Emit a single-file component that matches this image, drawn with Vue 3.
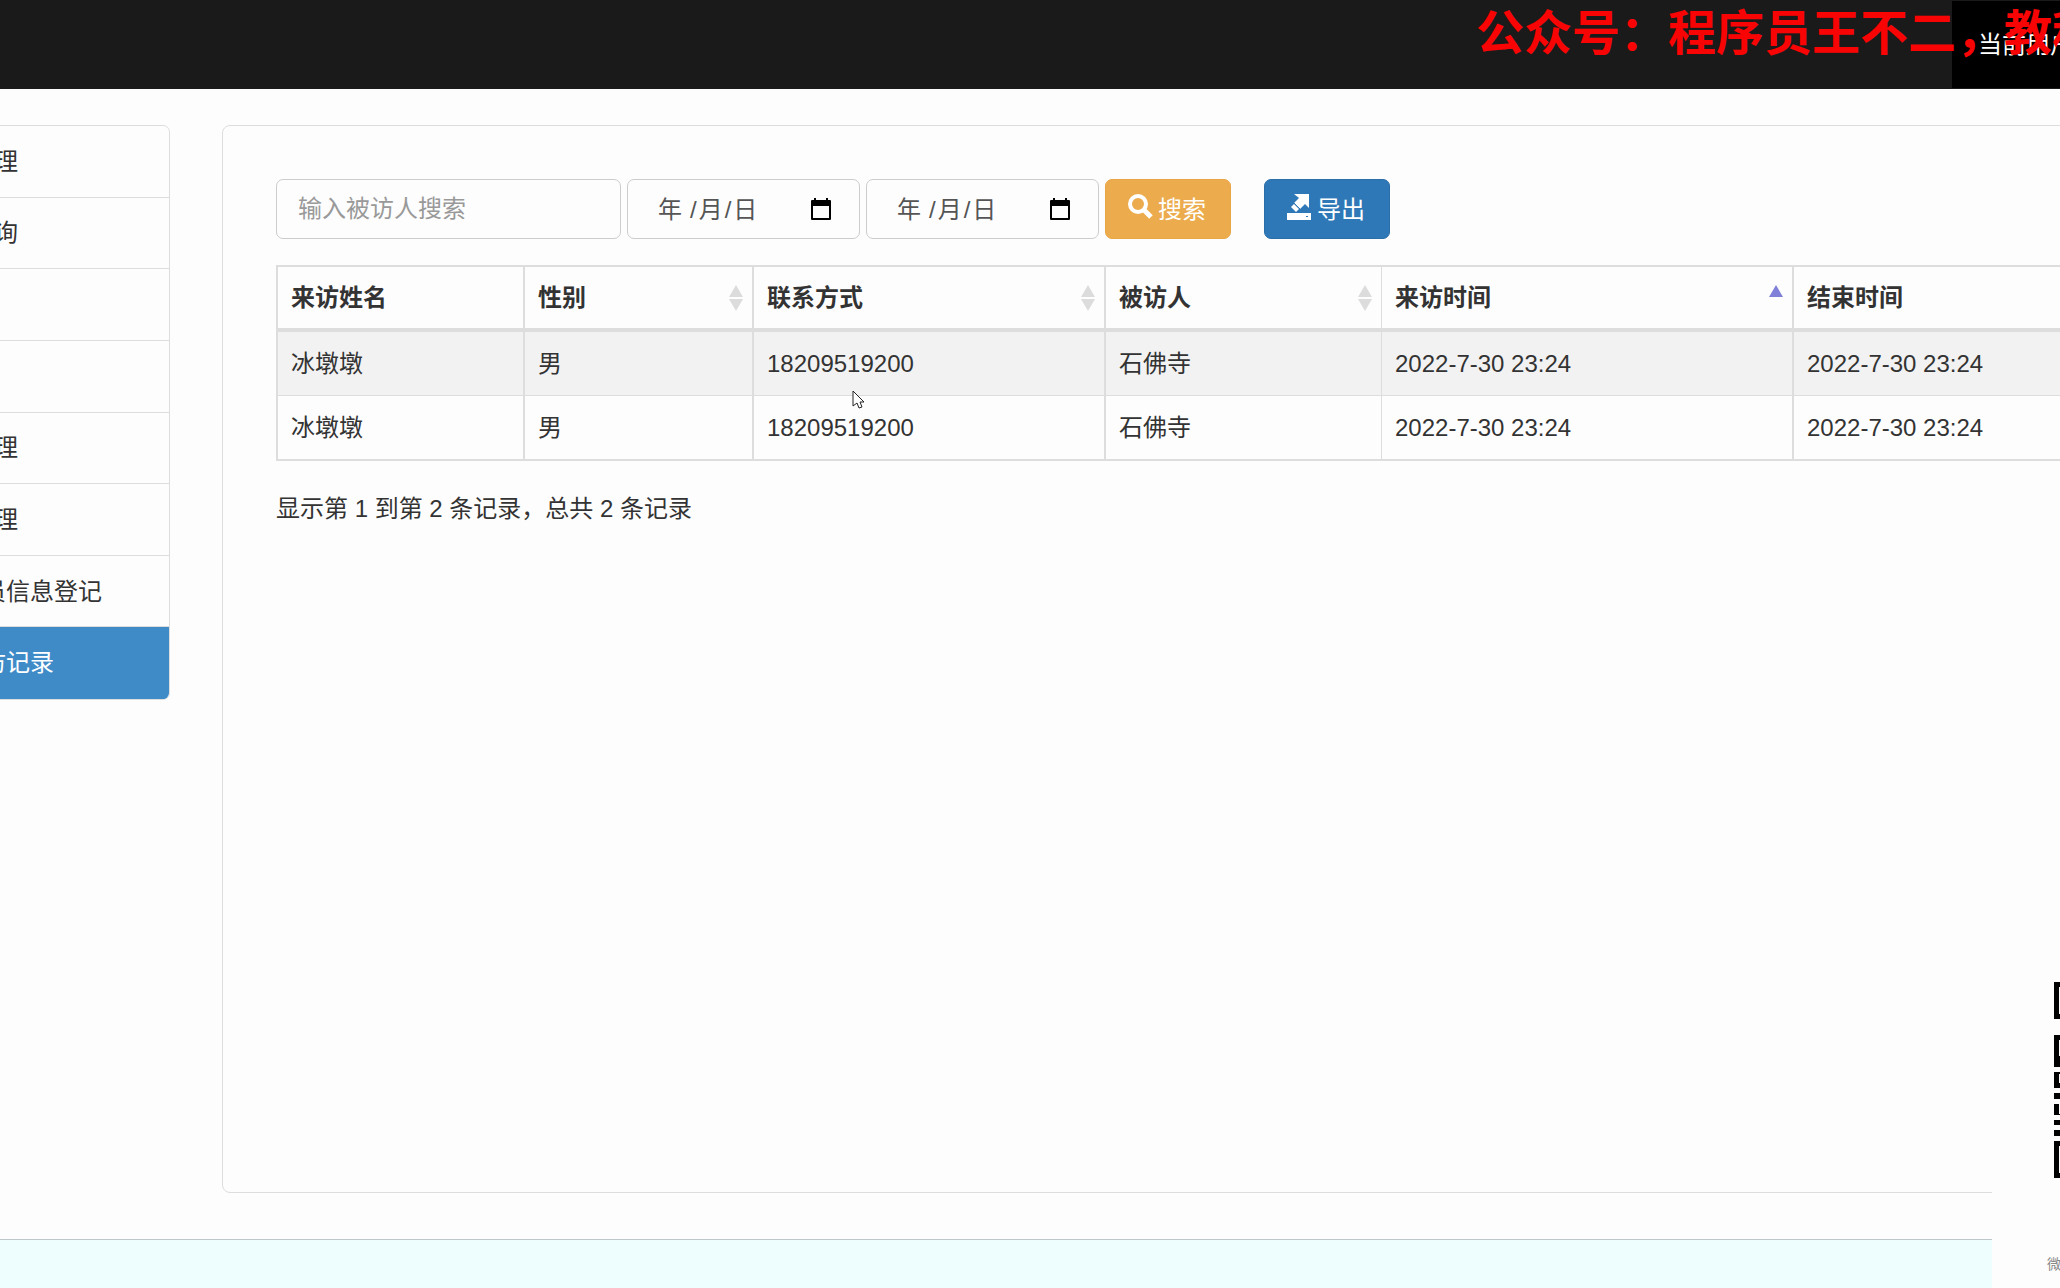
<script setup>
const menu = [
  '访客管理',
  '信息查询',
  '首页',
  '公告',
  '人员管理',
  '用户管理',
  '小区外来访人员信息登记',
  '所有人来访记录',
]
const active = 7

const columns = [
  { key: 'name', label: '来访姓名', sort: '' },
  { key: 'gender', label: '性别', sort: 'both' },
  { key: 'phone', label: '联系方式', sort: 'both' },
  { key: 'host', label: '被访人', sort: 'both' },
  { key: 'start', label: '来访时间', sort: 'asc' },
  { key: 'end', label: '结束时间', sort: 'both' },
]
const record = {
  name: '冰墩墩',
  gender: '男',
  phone: '18209519200',
  host: '石佛寺',
  start: '2022-7-30 23:24',
  end: '2022-7-30 23:24',
}
const rows = [{ ...record }, { ...record }]
</script>

<template>
  <div class="page">
    <header class="topbar">
      <a class="user" href="#">当前用户</a>
      <div class="marquee">公众号：程序员王不二，教程</div>
    </header>

    <main class="body">
      <nav class="menu">
        <a
          v-for="(item, i) in menu"
          :key="i"
          href="#"
          class="menu-item"
          :class="{ active: i === active }"
        >{{ item }}</a>
      </nav>

      <section class="panel">
        <form class="toolbar" @submit.prevent>
          <input class="field search" type="text" placeholder="输入被访人搜索" aria-label="输入被访人搜索" />
          <label v-for="n in 2" :key="n" class="date">
            <input class="field" type="date" :aria-label="n === 1 ? '开始日期' : '结束日期'" />
            <span class="date-face" aria-hidden="true">
              <span class="year">年</span><span>/</span><span>月</span><span>/</span><span>日</span>
              <svg class="calendar" viewBox="0 0 20 22">
                <path d="M1 3h18v18H1z" fill="none" stroke="#000" stroke-width="2" stroke-linejoin="round" />
                <path d="M1 2h18v6H1zM3 0h2v3H3zM15 0h2v3h-2z" fill="#000" />
              </svg>
            </span>
          </label>
          <button class="btn btn-search" type="submit">
            <svg class="icon" viewBox="0 0 26 26">
              <circle cx="11" cy="10" r="8" fill="none" stroke="#fff" stroke-width="4" />
              <path d="M17 16l7 7" stroke="#fff" stroke-width="5" />
            </svg>
            搜索
          </button>
          <button class="btn btn-export" type="button">
            <svg class="icon" viewBox="0 0 26 26">
              <path d="M8 0h15v14l-4-4-5 5-6-6 5-5z" fill="#fff" />
              <path d="M8 10l5 5-3 3-5-5z" fill="#fff" />
              <path d="M8 9l6 6" stroke="#2f78b7" stroke-width="1" />
              <path d="M1 19h24v7H1z" fill="#fff" />
              <path d="M20 22h2v1h-2z" fill="#2f78b7" />
            </svg>
            导出
          </button>
        </form>

        <table class="grid">
          <colgroup>
            <col v-for="c in columns" :key="c.key" :class="'col-' + c.key" />
          </colgroup>
          <thead>
            <tr>
              <th v-for="c in columns" :key="c.key" scope="col">
                <div class="head">
                  {{ c.label }}
                  <svg v-if="c.sort" class="sort" viewBox="0 0 14 26">
                    <path d="M7 0l7 12H0z" :fill="c.sort === 'asc' ? '#8080d8' : '#dcdcdc'" />
                    <path v-if="c.sort === 'both'" d="M0 14h14l-7 12z" fill="#dcdcdc" />
                  </svg>
                </div>
              </th>
            </tr>
          </thead>
          <tbody>
            <tr v-for="(r, i) in rows" :key="i">
              <td v-for="c in columns" :key="c.key">{{ r[c.key] }}</td>
            </tr>
          </tbody>
        </table>
        <p class="summary">显示第 1 到第 2 条记录，总共 2 条记录</p>
      </section>
    </main>

    <footer class="footer"></footer>

    <aside class="qr">
      <svg class="code" viewBox="0 0 6 196">
        <path
          d="M0 0h6v37H0zM0 53h6v32H0zM0 90h6v16H0zM0 111h6v6H0zM0 122h6v11H0zM0 138h6v5H0zM0 148h6v6H0zM0 159h6v37H0z"
          fill="#000"
        />
        <path d="M5 5h1v27H5zM5 58h1v16H5zM5 92h1v9H5zM5 122h1v10H5zM5 164h1v27H5z" fill="#fff" />
      </svg>
      <span class="caption">微信</span>
    </aside>

    <svg class="cursor" viewBox="0 0 13 20">
      <path d="M1 1v15l4-3 2 5 3-1-2-5h4z" fill="#fff" stroke="#222" stroke-width="1" />
    </svg>
  </div>
</template>

<style>
body {
  margin: 0;
  background: #fdfdfd;
  overflow: hidden;
}
</style>

<style scoped>
.page {
  position: relative;
  display: flex;
  flex-direction: column;
  min-height: 100vh;
  overflow: hidden;
  color: #333;
  font-family: "Liberation Sans", "Noto Sans CJK SC", sans-serif;
  font-size: 24px;
  line-height: 35px;
}
.page * {
  box-sizing: border-box;
}
.topbar {
  position: relative;
  display: flex;
  justify-content: flex-end;
  height: 89px;
  padding: 1px 0;
  background: #1a1a1a;
}
.user {
  width: 108px;
  padding: 26px;
  background: #000;
  color: #fff;
  text-decoration: none;
  white-space: nowrap;
  overflow: hidden;
}
.marquee {
  position: absolute;
  top: 0;
  right: 0;
  width: 584px;
  overflow: hidden;
  color: #f80404;
  font-size: 48px;
  font-weight: 700;
  line-height: 68px;
  white-space: nowrap;
}
.body {
  display: flex;
  flex: 1;
  align-items: stretch;
  gap: 52px;
  margin: 36px -200px 46px -230px;
}
.menu {
  display: flex;
  flex: none;
  flex-direction: column;
  align-self: flex-start;
  width: 400px;
  height: 575px;
  border: 1px solid #ddd;
  border-radius: 7px;
  overflow: hidden;
}
.menu-item {
  display: flex;
  flex: 1;
  align-items: center;
  justify-content: center;
  border-bottom: 1px solid #ddd;
  color: #333;
  text-decoration: none;
}
.menu-item.active {
  border-color: #3f8bc8;
  background: #3f8bc8;
  color: #fff;
}
.panel {
  flex: 1;
  min-width: 0;
  padding: 53px;
  border: 1px solid #ddd;
  border-radius: 8px;
}
.toolbar {
  display: flex;
  gap: 6px;
  margin-bottom: 26px;
}
.field {
  height: 60px;
  padding: 0 21px;
  border: 1px solid #ccc;
  border-radius: 7px;
  background: #fdfdfd;
  color: #555;
  font: inherit;
  outline: 0;
}
.field::placeholder {
  color: #999;
  opacity: 1;
}
.search {
  width: 345px;
}
.date {
  position: relative;
  width: 233px;
}
.date .field {
  display: block;
  width: 100%;
  color: transparent;
}
.date .field::-webkit-datetime-edit,
.date .field::-webkit-calendar-picker-indicator {
  opacity: 0;
}
.date-face {
  position: absolute;
  inset: 0;
  display: flex;
  align-items: center;
  gap: 2px;
  padding: 0 29px 0 31px;
  color: #555;
  pointer-events: none;
}
.year {
  margin-right: 6px;
}
.calendar {
  width: 20px;
  height: 22px;
  margin-left: auto;
}
.btn {
  display: flex;
  align-items: center;
  gap: 5px;
  width: 126px;
  height: 60px;
  padding: 0 21px;
  border: 1px solid;
  border-radius: 7px;
  color: #fff;
  font: inherit;
  white-space: nowrap;
}
.btn-search {
  border-color: #e9a545;
  background: #ecab4c;
}
.btn-export {
  margin-left: 27px;
  border-color: #2b6ea8;
  background: #2f78b7;
}
.icon {
  flex: none;
  width: 26px;
  height: 26px;
  margin-bottom: 4px;
}
.grid {
  width: 100%;
  border: 2px solid #ddd;
  border-collapse: separate;
  border-spacing: 0;
  table-layout: fixed;
}
.col-name {
  width: 247px;
}
.col-gender {
  width: 229px;
}
.col-phone {
  width: 352px;
}
.col-host {
  width: 276px;
}
.col-start {
  width: 412px;
}
th,
td {
  height: 63px;
  padding: 0 13px;
  border-right: 2px solid #ddd;
  text-align: left;
  white-space: nowrap;
}
th {
  height: 65px;
  padding-right: 9px;
  border-bottom: 4px solid #ddd;
}
th:last-child,
td:last-child {
  border-right: 0;
}
th:nth-child(4),
td:nth-child(4) {
  border-right-width: 1px;
}
.head {
  display: flex;
  align-items: center;
  justify-content: space-between;
}
.sort {
  width: 14px;
  height: 26px;
}
tbody tr:first-child td {
  height: 64px;
  border-bottom: 1px solid #ddd;
  background: #f2f2f2;
}
.summary {
  margin: 30px 0 0;
}
.footer {
  height: 49px;
  border-top: 1px solid #bfc8c8;
  background: #eefdfd;
}
.qr {
  position: absolute;
  right: 0;
  bottom: 0;
  display: flex;
  flex-direction: column;
  align-items: flex-end;
  justify-content: space-between;
  width: 68px;
  height: 320px;
  padding: 14px 0;
  background: #fdfdfd;
  overflow: hidden;
}
.code {
  width: 6px;
  height: 196px;
}
.caption {
  width: 13px;
  color: #888;
  font-size: 14px;
  line-height: 20px;
  white-space: nowrap;
}
.cursor {
  position: absolute;
  top: 390px;
  left: 852px;
  width: 13px;
  height: 20px;
}
</style>
